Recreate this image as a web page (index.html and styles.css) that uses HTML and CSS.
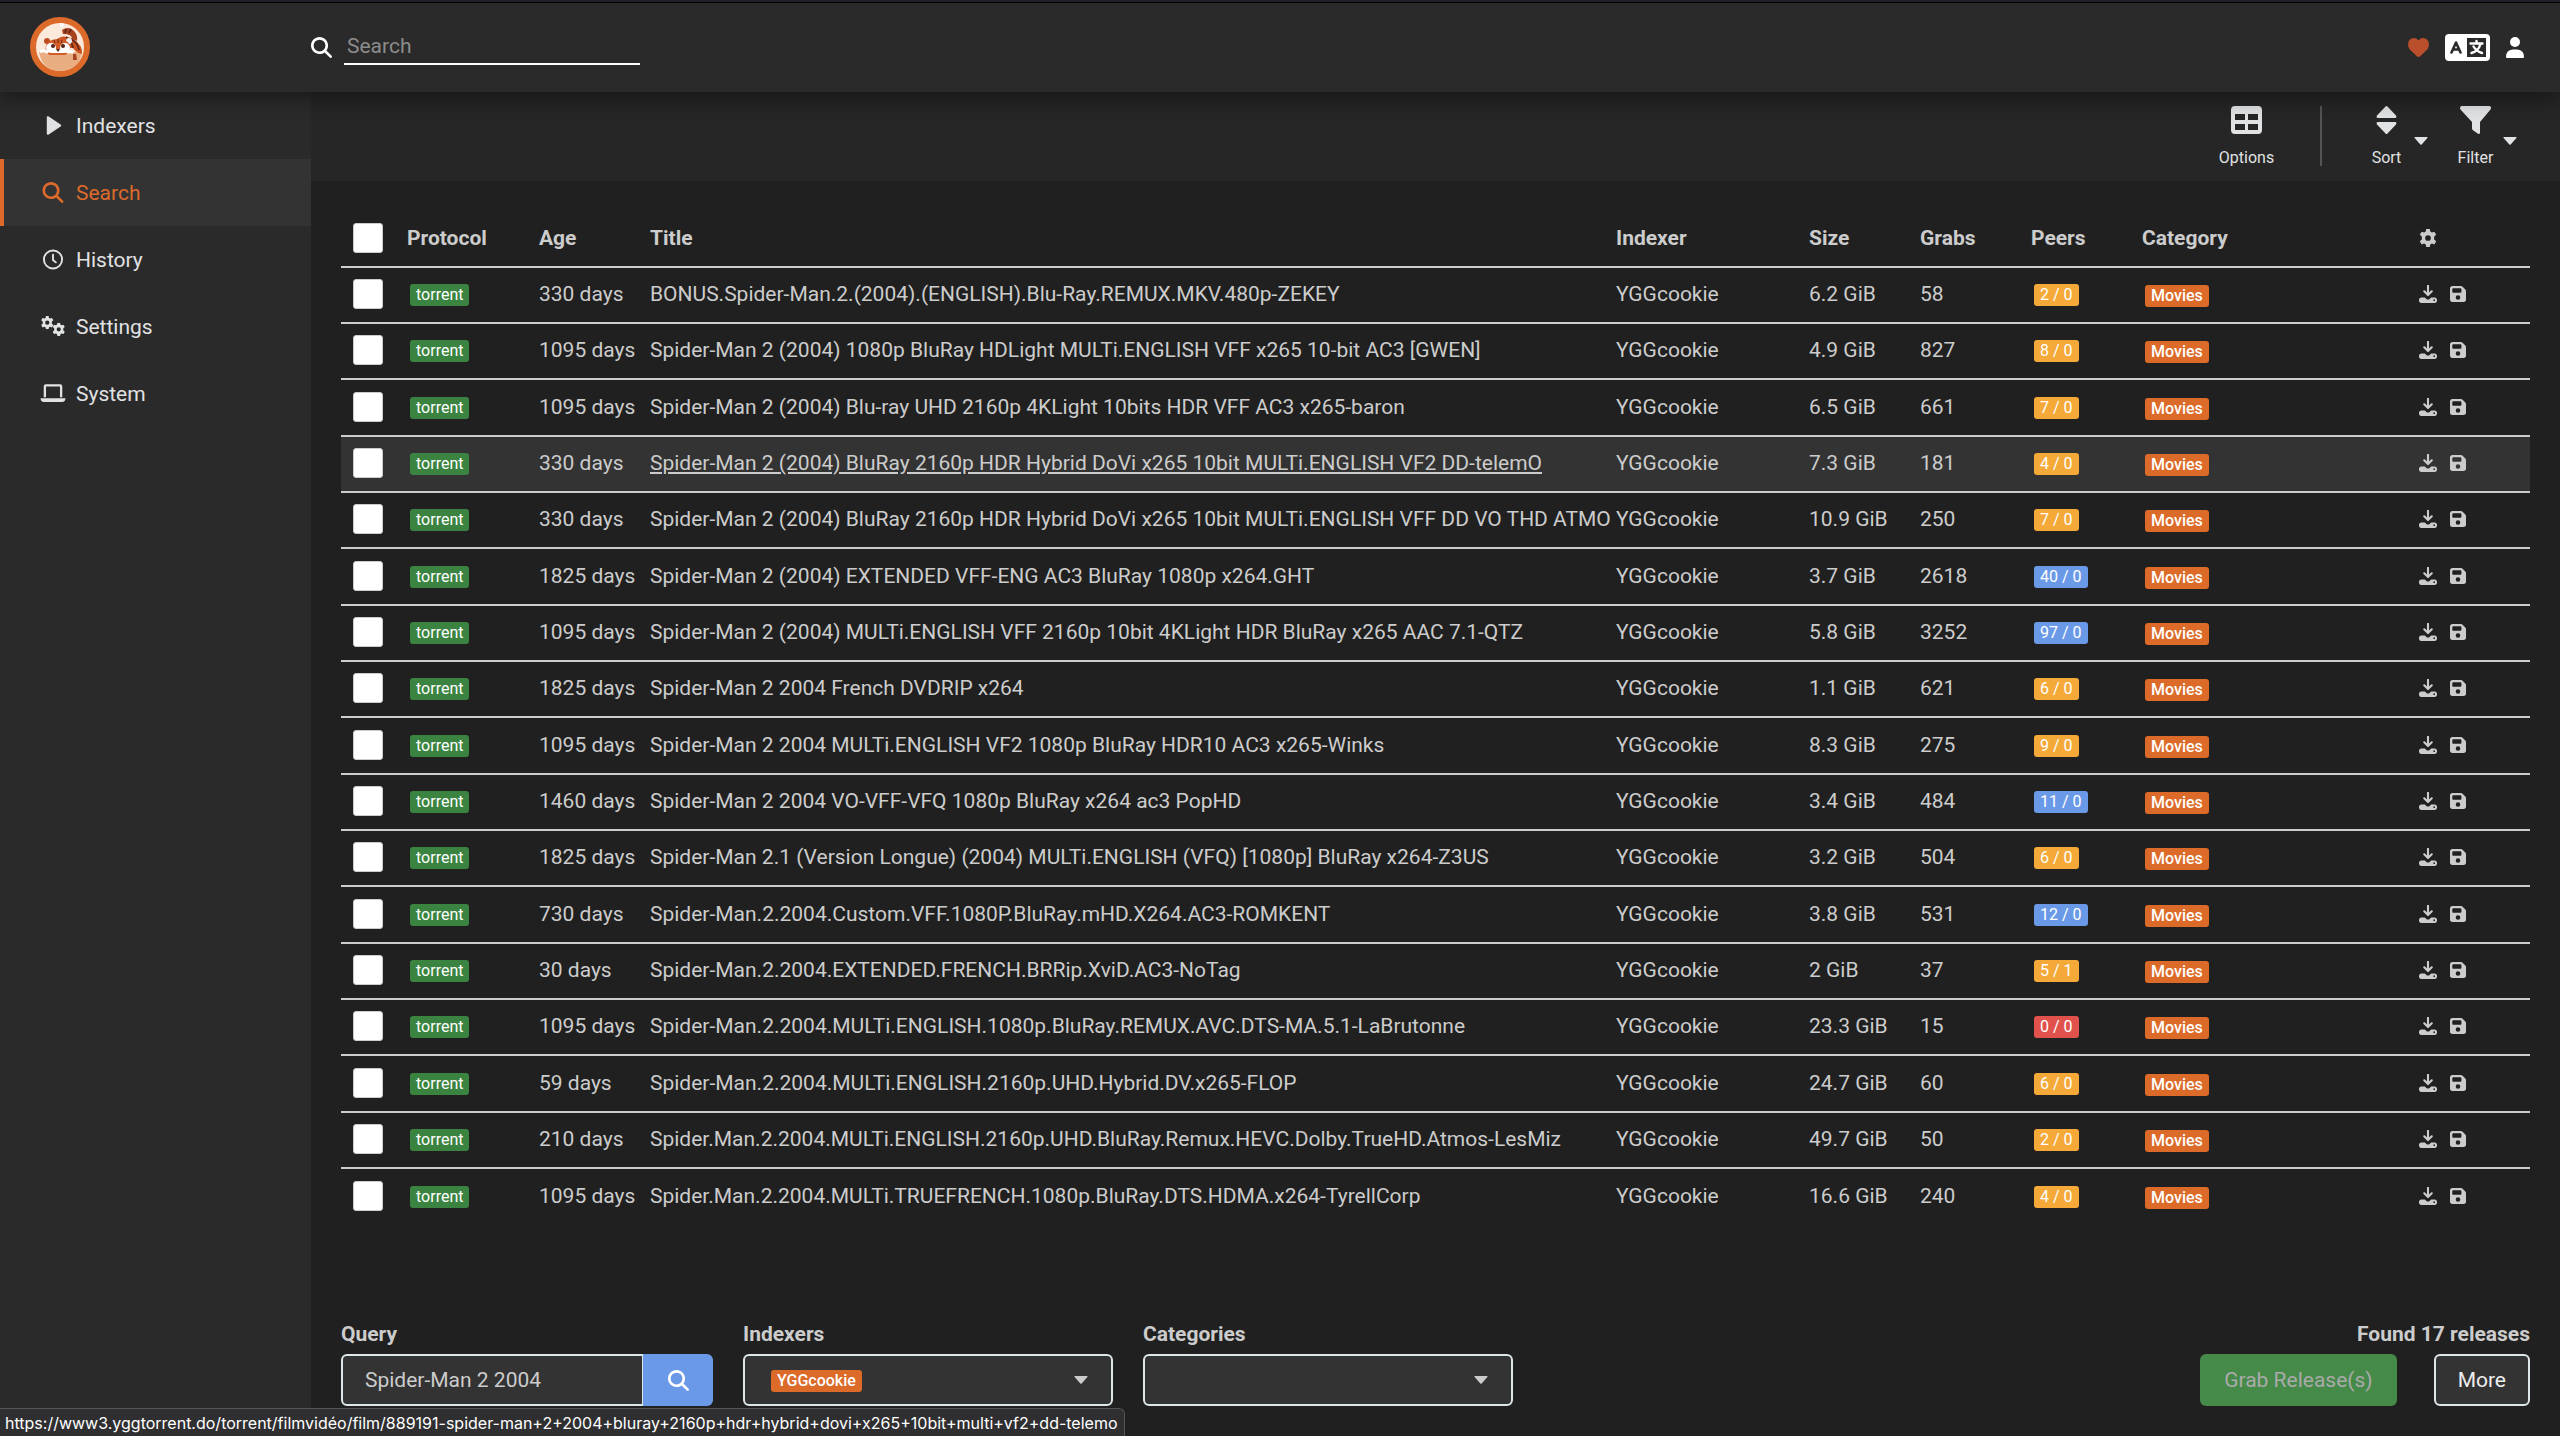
FILE: index.html
```html
<!DOCTYPE html>
<html lang="en">
<head>
<meta charset="utf-8">
<title>Search - Prowlarr</title>
<link rel="stylesheet" href="styles.css">
</head>
<body>
<svg class="sprite" aria-hidden="true">
  <symbol id="i-search" viewBox="0 0 512 512"><path d="M416 208c0 45.900-14.900 88.300-40 122.700L502.600 457.400c12.500 12.500 12.500 32.800 0 45.300s-32.800 12.500-45.300 0L330.700 376c-34.400 25.200-76.800 40-122.700 40C93.100 416 0 322.900 0 208S93.100 0 208 0S416 93.100 416 208zM208 352a144 144 0 1 0 0-288 144 144 0 1 0 0 288z"/></symbol>
  <symbol id="i-download" viewBox="0 0 512 512"><path d="M256 24v250M150 180l106 106 106-106" fill="none" stroke="currentColor" stroke-width="60" stroke-linecap="round" stroke-linejoin="round"/><path d="M64 352h102l45 45c25 25 65 25 90 0l45-45h102c35 0 64 29 64 64v32c0 35-29 64-64 64H64c-35 0-64-29-64-64v-32c0-35 29-64 64-64zm368 56a24 24 0 1 0 0 48 24 24 0 1 0 0-48z"/></symbol>
  <symbol id="i-save" viewBox="0 0 448 448"><path fill-rule="evenodd" d="M64 0C29 0 0 29 0 64v320c0 35 29 64 64 64h320c35 0 64-29 64-64V141c0-17-7-33-19-45L352 19C340 7 324 0 307 0zM64 96c0-18 14-32 32-32h192c18 0 32 14 32 32v64c0 18-14 32-32 32H96c-18 0-32-14-32-32zM224 256a64 64 0 1 1 0 128 64 64 0 1 1 0-128z"/></symbol>
  <symbol id="i-gear" viewBox="0 0 24 24"><path fill-rule="evenodd" d="M9.600 0h4.800l.6 3.400 2.200 1.300 3.300-1.200 2.400 4.200-2.700 2.200v4.200l2.700 2.200-2.400 4.200-3.300-1.200-2.200 1.300-.6 3.400H9.600L9 20.600l-2.200-1.300-3.300 1.200-2.400-4.200 2.700-2.200V9.900L1.100 7.700l2.400-4.200 3.300 1.200L9 3.400zM12 8.200a3.800 3.800 0 1 0 0 7.600 3.800 3.800 0 1 0 0-7.600z"/></symbol>
  <symbol id="i-caret" viewBox="0 0 14 8"><path d="M1 0h12q1 0 .4.900L7.700 7.500q-.7.700-1.400 0L.6.900Q0 0 1 0z"/></symbol>
</svg>

<div class="page">
  <header class="header">
    <a class="logo" href="#" aria-label="Prowlarr">
      <svg viewBox="0 0 60 60">
        <circle cx="30" cy="30" r="27" fill="#fbe9dc" stroke="#dc6b2b" stroke-width="6"/>
        <path d="M9 35h43q-2 17-22 19Q12 53 9 35z" fill="#e9ad82"/>
        <path d="M32 13q6-4 11 0 5 4 4 11l-5-2q0-5-9-5z" fill="#a84320"/>
        <path d="M25 24q7-8 18-2 10 6 9 15-6-1-9-6H28z" fill="#cc5422"/>
        <path d="M41 22q7 4 8 11M36 20q6 4 7 11M36 12l-1 4M41 12l-2 4" stroke="#682b18" stroke-width="2" fill="none"/>
        <circle cx="17" cy="24" r="3" fill="#bd4c22"/><circle cx="39" cy="24" r="3" fill="#eee"/>
        <path d="M16 29q2-7 12-7t12 7q1 7-5 9H20q-6-2-4-9z" fill="#d45c27"/>
        <circle cx="21" cy="31" r="5" fill="#fff"/><circle cx="35" cy="31" r="5" fill="#fff"/>
        <path d="M21 36q2-4 7-4t7 4z" fill="#fff"/>
        <circle cx="23" cy="29" r="2" fill="#522316"/><circle cx="33" cy="29" r="2" fill="#522316"/>
        <path d="M26 32h4l-2 3z" fill="#522316"/><path d="M28 22v4M24 23l1 3M32 23l-1 3" stroke="#682b18" stroke-width="1"/>
        <path d="M10 35q4-3 8 1M37 36q3-3 6 0" stroke="#fff" stroke-width="3" fill="none"/>
        <path d="M43 37h3l1 6h-4z" fill="#a84320"/><circle cx="32" cy="8" r="2" fill="#fff"/>
      </svg>
    </a>
    <form class="site-search" role="search">
      <svg class="icon-md"><use href="#i-search"/></svg>
      <input type="text" placeholder="Search" aria-label="Search">
    </form>
    <nav class="header-links" aria-label="Account">
      <a class="heart" href="#" aria-label="Donate"><svg viewBox="0 0 22 20"><path d="M11 20q-1 0-1.500-.5L1.800 12Q0 10 0 6.500 0 3.500 2 1.700 4 0 6.200 0 9 0 11 2.500 13 0 15.800 0 18 0 20 1.700q2 1.800 2 4.800 0 3.500-1.800 5.500l-7.700 7.500Q12 20 11 20z"/></svg></a>
      <a class="language" href="#" aria-label="Language"><svg viewBox="0 0 45 27"><path fill-rule="evenodd" d="M4 0h37q4 0 4 4v19q0 4-4 4H4q-4 0-4-4V4q0-4 4-4zm18 4v19h19V4z"/><path d="M6.500 18.500L11 8.500l4.500 10M8 15.500h6" fill="none" stroke="#2a2a2a" stroke-width="2.600" stroke-linecap="round" stroke-linejoin="round"/><path d="M25.500 9.500h12M31.500 7v2.500M35.500 10q-2 7-9 9M28.500 12.500q3 5 8.500 6.500" fill="none" stroke="currentColor" stroke-width="2.400" stroke-linecap="round"/></svg></a>
      <a class="user" href="#" aria-label="User"><svg viewBox="0 0 18 21"><circle cx="9" cy="5" r="5"/><path d="M6.500 12.500h5Q18 13 18 20q0 1-1 1H1q-1 0-1-1 0-7 6.500-7.500z"/></svg></a>
    </nav>
  </header>

  <div class="body">
    <nav class="sidebar" aria-label="Main">
      <a href="#"><svg viewBox="0 0 22 22"><path d="M4.500 1.500Q5.500 1 6.500 1.500L19 10q1.500 1 0 2L6.500 20.500q-2 .8-2-1z"/></svg>Indexers</a>
      <a href="#" class="active"><svg><use href="#i-search"/></svg>Search</a>
      <a href="#"><svg viewBox="0 0 22 22"><path d="M11 6v5.500l3 2.500" fill="none" stroke="currentColor" stroke-width="2" stroke-linecap="round"/><circle cx="11" cy="11" r="9.500" fill="none" stroke="currentColor" stroke-width="2"/></svg>History</a>
      <a href="#"><svg viewBox="0 0 26 22"><use href="#i-gear" x="0" y="0" width="14" height="14"/><use href="#i-gear" x="12" y="7" width="14" height="14"/></svg>Settings</a>
      <a href="#"><svg viewBox="0 0 26 22"><path d="M4.500 15V3.500q0-1 1-1h15q1 0 1 1V15" fill="none" stroke="currentColor" stroke-width="2.400"/><path d="M0 16h26q0 4-3.500 4h-19Q0 20 0 16z"/></svg>System</a>
    </nav>

    <main class="main">
      <div class="toolbar">
        <button type="button"><svg viewBox="0 0 31 28"><path fill-rule="evenodd" d="M4 0h23q4 0 4 4v20q0 4-4 4H4q-4 0-4-4V4q0-4 4-4zm0 8v6h10V8zm13 0v6h10V8zM4 18v6h10v-6zm13 0v6h10v-6z"/></svg>Options</button>
        <span class="divider"></span>
        <button type="button"><svg viewBox="0 0 31 28"><path d="M14.500.6q1-1 2 0l8.500 9q1.200 2.400-1 2.400H7q-2.200 0-1-2.400zM7 16h17q2.200 0 1 2.400l-8.500 9q-1 1-2 0L6 18.400Q4.800 16 7 16z"/></svg>Sort<svg class="caret"><use href="#i-caret"/></svg></button>
        <button type="button"><svg viewBox="0 0 31 28"><path d="M1.500 0h28q2.500 1 1 3.500L20 16v11q-.5 1.500-2 .7l-5-3.500q-1-.7-1-2V16L.5 3.500Q-.8 1 1.500 0z"/></svg>Filter<svg class="caret"><use href="#i-caret"/></svg></button>
      </div>

      <div class="content">
        <table class="releases">
          <colgroup><col class="c-select"><col class="c-protocol"><col class="c-age"><col><col class="c-indexer"><col class="c-num"><col class="c-num"><col class="c-num"><col class="c-category"><col class="c-actions"></colgroup>
          <thead><tr><th><input type="checkbox" aria-label="Select all"></th><th>Protocol</th><th>Age</th><th>Title</th><th class="indexer">Indexer</th><th>Size</th><th>Grabs</th><th>Peers</th><th>Category</th><th><button type="button" class="icon-button" aria-label="Table options"><svg><use href="#i-gear"/></svg></button></th></tr></thead>
          <tbody id="rows"></tbody>
        </table>
      </div>

      <footer class="footer">
        <div class="field">
          <label for="query">Query</label>
          <div class="query"><input id="query" type="text" value="Spider-Man 2 2004"><button type="button" aria-label="Search"><svg class="icon-md"><use href="#i-search"/></svg></button></div>
        </div>
        <div class="field">
          <span class="label" id="l-indexers">Indexers</span>
          <button type="button" class="select" aria-labelledby="l-indexers"><span class="badge orange">YGGcookie</span><svg class="arrow"><use href="#i-caret"/></svg></button>
        </div>
        <div class="field">
          <span class="label" id="l-categories">Categories</span>
          <button type="button" class="select" aria-labelledby="l-categories"><svg class="arrow"><use href="#i-caret"/></svg></button>
        </div>
        <div class="actions">
          <span class="label">Found 17 releases</span>
          <div class="buttons"><button type="button" class="grab">Grab Release(s)</button><button type="button" class="more">More</button></div>
        </div>
      </footer>
    </main>
  </div>
</div>
<div class="status">https://www3.yggtorrent.do/torrent/filmvidéo/film/889191-spider-man+2+2004+bluray+2160p+hdr+hybrid+dovi+x265+10bit+multi+vf2+dd-telemo</div>
<script src="releases.js"></script>
</body>
</html>
```
FILE: styles.css
```css
* { box-sizing: border-box; }
body { margin: 0; background: #202020; color: #ccc; font: 21px/30px Roboto, sans-serif; }
button, input { font: inherit; color: inherit; }
button { padding: 0; border: 0; background: none; }
a { color: inherit; text-decoration: none; }
svg { display: block; fill: currentColor; }
.sprite { position: absolute; width: 0; height: 0; }
.icon-md { width: 21px; height: 21px; }

.page { display: flex; flex-direction: column; min-height: 100vh; }
.header { position: relative; z-index: 1; display: flex; align-items: center; height: 92px; padding: 0 36px 0 30px; border-top: 2px solid #20202a; background: #2a2a2a; box-shadow: inset 0 1px #000, 0 6px 20px rgba(0, 0, 0, .4); color: #fff; }
.logo { width: 281px; }
.logo svg { width: 60px; height: 60px; }
.site-search { display: flex; align-items: center; gap: 12px; flex: 1; }
.site-search input { width: 296px; height: 36px; padding: 0 3px; border: 0; border-bottom: 2px solid #fff; background: none; }
.site-search input::placeholder { color: #8c8c8c; opacity: 1; }
.header-links { display: flex; align-items: center; gap: 16px; }
.heart { color: #b94f2b; }
.heart svg { width: 21px; height: 19px; }
.language svg { width: 45px; height: 27px; }
.user svg { width: 18px; height: 21px; }

.body { display: flex; flex: 1; }
.sidebar { flex: none; width: 311px; background: #2a2a2a; color: #e1e2e3; }
.sidebar a { display: flex; align-items: center; gap: 10px; height: 67px; padding-left: 36px; border-left: 4px solid transparent; }
.sidebar svg { width: 26px; height: 21px; }
.sidebar .active { border-color: #dd6a2a; background: #333; color: #dd6a2a; }

.main { display: flex; flex: 1; flex-direction: column; min-width: 0; }
.toolbar { display: flex; justify-content: flex-end; height: 89px; padding: 14px 40px 0 0; background: #262626; color: #e1e2e3; }
.toolbar button { position: relative; display: flex; flex-direction: column; align-items: center; gap: 14px; width: 89px; font-size: 16px; line-height: 20px; }
.toolbar button > svg { width: 31px; height: 28px; }
.toolbar button > .caret { position: absolute; right: 3px; top: 31px; width: 14px; height: 8px; }
.divider { width: 2px; height: 60px; margin: 0 20px 0 29px; background: #555; }

.content { flex: 1; padding: 30px 30px 0; }
.releases { width: 100%; table-layout: fixed; border-collapse: collapse; }
.c-select { width: 54px; }
.c-protocol { width: 132px; }
.c-age { width: 111px; }
.c-indexer { width: 186px; }
.c-num { width: 111px; }
.c-category { width: 277px; }
.c-actions { width: 123px; }
.releases th, .releases td { height: 56px; padding: 0 0 2px 12px; overflow: hidden; text-align: left; white-space: nowrap; }
.releases .indexer { padding-left: 5px; }
.releases th { font-weight: 700; }
.releases td { border-top: 2px solid #ccc; }
.releases tr:nth-child(3n) td { height: 57px; }
.releases .hover { background: #333; }
.hover .title { text-decoration: underline; }
.releases input { appearance: none; display: block; width: 30px; height: 30px; margin: 0; border: 1px solid #ccc; border-radius: 3px; background: #fff; }
.icon-button { display: block; }
.icon-button svg { width: 18px; height: 18px; }
.row-actions { display: flex; align-items: center; gap: 13px; }
.icon-button .save { width: 16px; height: 16px; }
.badge { display: inline-block; margin-left: 3px; padding: 0 6px; border-radius: 3px; color: #fff; font-size: 16px; line-height: 22px; vertical-align: middle; }
.green { background: #3a8340; }
.yellow { background: #f4a938; }
.blue { background: #6a9ae7; }
.red { background: #e0524b; }
.orange { margin-top: 2px; background: #dc6a29; font-weight: 500; }

.footer { display: flex; align-items: flex-start; gap: 30px; padding: 0 30px 30px; }
.field, .actions { display: flex; flex-direction: column; gap: 5px; }
.field { width: 370px; }
.field:first-child { width: 372px; }
.field label, .label { font-weight: 700; }
.query { display: flex; }
.query input { flex: 1; min-width: 0; height: 52px; padding: 0 22px; border: 2px solid #dde6e9; border-right-width: 1px; border-radius: 6px 0 0 6px; background: #333; }
.query button { display: grid; place-items: center; width: 70px; border-radius: 0 6px 6px 0; background: #6a9ae7; color: #fff; }
.select { display: flex; align-items: center; height: 52px; padding: 0 23px; border: 2px solid #dde6e9; border-radius: 6px; background: #333; }
.arrow { width: 14px; height: 8px; margin-left: auto; }
.actions { margin-left: auto; text-align: right; }
.buttons { display: flex; gap: 37px; }
.buttons button { height: 52px; padding: 0 24px; border-radius: 6px; }
.buttons .grab { background: #468a49; color: #aaa; }
.buttons .more { padding: 0 22px; border: 2px solid #dde6e9; background: #333; color: #eee; }
.status { position: fixed; bottom: 0; left: 0; z-index: 2; height: 28px; padding: 0 6px 0 5px; border: 1px solid #555; border-width: 1px 1px 0 0; border-radius: 0 6px 0 0; background: #2f2f31; color: #fff; font: 16px/29px Inter, sans-serif; white-space: nowrap; }
```
FILE: releases.js
```js
// age, title, size, grabs, peers, peer colour
const releases = [
  ['330 days', 'BONUS.Spider-Man.2.(2004).(ENGLISH).Blu-Ray.REMUX.MKV.480p-ZEKEY', '6.2 GiB', 58, '2 / 0', 'yellow'],
  ['1095 days', 'Spider-Man 2 (2004) 1080p BluRay HDLight MULTi.ENGLISH VFF x265 10-bit AC3 [GWEN]', '4.9 GiB', 827, '8 / 0', 'yellow'],
  ['1095 days', 'Spider-Man 2 (2004) Blu-ray UHD 2160p 4KLight 10bits HDR VFF AC3 x265-baron', '6.5 GiB', 661, '7 / 0', 'yellow'],
  ['330 days', 'Spider-Man 2 (2004) BluRay 2160p HDR Hybrid DoVi x265 10bit MULTi.ENGLISH VF2 DD-telemO', '7.3 GiB', 181, '4 / 0', 'yellow'],
  ['330 days', 'Spider-Man 2 (2004) BluRay 2160p HDR Hybrid DoVi x265 10bit MULTi.ENGLISH VFF DD VO THD ATMOS', '10.9 GiB', 250, '7 / 0', 'yellow'],
  ['1825 days', 'Spider-Man 2 (2004) EXTENDED VFF-ENG AC3 BluRay 1080p x264.GHT', '3.7 GiB', 2618, '40 / 0', 'blue'],
  ['1095 days', 'Spider-Man 2 (2004) MULTi.ENGLISH VFF 2160p 10bit 4KLight HDR BluRay x265 AAC 7.1-QTZ', '5.8 GiB', 3252, '97 / 0', 'blue'],
  ['1825 days', 'Spider-Man 2 2004 French DVDRIP x264', '1.1 GiB', 621, '6 / 0', 'yellow'],
  ['1095 days', 'Spider-Man 2 2004 MULTi.ENGLISH VF2 1080p BluRay HDR10 AC3 x265-Winks', '8.3 GiB', 275, '9 / 0', 'yellow'],
  ['1460 days', 'Spider-Man 2 2004 VO-VFF-VFQ 1080p BluRay x264 ac3 PopHD', '3.4 GiB', 484, '11 / 0', 'blue'],
  ['1825 days', 'Spider-Man 2.1 (Version Longue) (2004) MULTi.ENGLISH (VFQ) [1080p] BluRay x264-Z3US', '3.2 GiB', 504, '6 / 0', 'yellow'],
  ['730 days', 'Spider-Man.2.2004.Custom.VFF.1080P.BluRay.mHD.X264.AC3-ROMKENT', '3.8 GiB', 531, '12 / 0', 'blue'],
  ['30 days', 'Spider-Man.2.2004.EXTENDED.FRENCH.BRRip.XviD.AC3-NoTag', '2 GiB', 37, '5 / 1', 'yellow'],
  ['1095 days', 'Spider-Man.2.2004.MULTi.ENGLISH.1080p.BluRay.REMUX.AVC.DTS-MA.5.1-LaBrutonne', '23.3 GiB', 15, '0 / 0', 'red'],
  ['59 days', 'Spider-Man.2.2004.MULTi.ENGLISH.2160p.UHD.Hybrid.DV.x265-FLOP', '24.7 GiB', 60, '6 / 0', 'yellow'],
  ['210 days', 'Spider.Man.2.2004.MULTi.ENGLISH.2160p.UHD.BluRay.Remux.HEVC.Dolby.TrueHD.Atmos-LesMiz', '49.7 GiB', 50, '2 / 0', 'yellow'],
  ['1095 days', 'Spider.Man.2.2004.MULTi.TRUEFRENCH.1080p.BluRay.DTS.HDMA.x264-TyrellCorp', '16.6 GiB', 240, '4 / 0', 'yellow']
];

document.getElementById('rows').innerHTML = releases.map(([age, title, size, grabs, peers, colour], i) => `
  <tr${i === 3 ? ' class="hover"' : ''}>
    <td><input type="checkbox" aria-label="Select release"></td>
    <td><span class="badge green">torrent</span></td>
    <td>${age}</td>
    <td><a class="title" href="#">${title}</a></td>
    <td class="indexer">YGGcookie</td>
    <td>${size}</td>
    <td>${grabs}</td>
    <td><span class="badge ${colour}">${peers}</span></td>
    <td><span class="badge orange">Movies</span></td>
    <td><div class="row-actions">
      <button type="button" class="icon-button" aria-label="Grab"><svg><use href="#i-download"/></svg></button>
      <button type="button" class="icon-button" aria-label="Save"><svg class="save"><use href="#i-save"/></svg></button>
    </div></td>
  </tr>`).join('');
```
